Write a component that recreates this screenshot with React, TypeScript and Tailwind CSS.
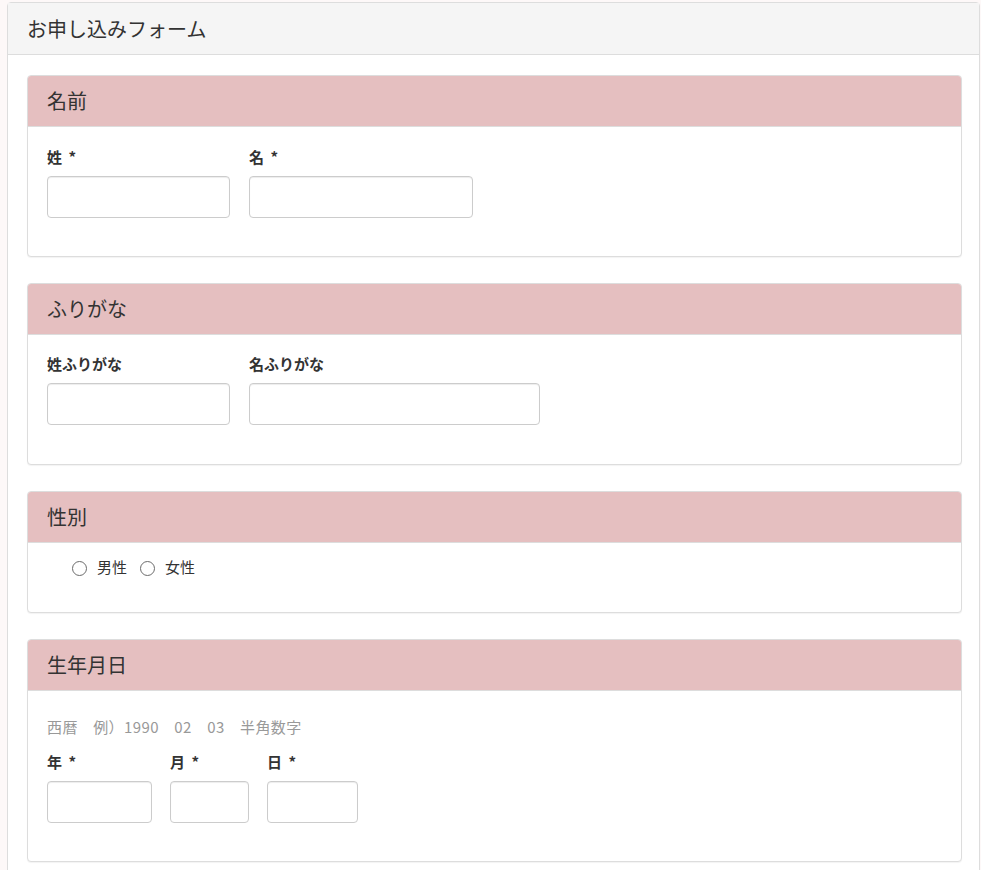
import React from "react";

const FONT = {
  fontFamily: '"Noto Sans CJK JP", "Noto Sans", sans-serif',
};

function Section({
  title,
  bodyClass,
  children,
}: {
  title: string;
  bodyClass: string;
  children: React.ReactNode;
}) {
  return (
    <div className="rounded-[4px] border border-[#dddddd] bg-white shadow-[0_1px_1px_rgba(0,0,0,0.05)]">
      <div className="flex h-[51px] items-center rounded-t-[3px] border-b border-[#dddddd] bg-[#e5bfc0] px-[19px] text-[20px] leading-[28px] text-[#333333]">
        {title}
      </div>
      <div className={bodyClass}>{children}</div>
    </div>
  );
}

function Field({
  label,
  width,
}: {
  label: string;
  width: string;
}) {
  return (
    <div className="flex flex-col">
      <label className="h-5 text-[15px] font-bold leading-5 text-[#333333] [word-spacing:3px]">
        {label}
      </label>
      <input
        type="text"
        className={`mt-[9px] h-[42px] rounded-[4px] border border-[#cccccc] bg-white px-3 shadow-[inset_0_1px_1px_rgba(0,0,0,0.075)] outline-none ${width}`}
      />
    </div>
  );
}

function Radio({ label }: { label: string }) {
  return (
    <label className="flex items-center text-[15px] leading-5 text-[#333333]">
      <span className="mt-[3px] inline-block h-[15px] w-[15px] rounded-full border border-[#6b6b6b] bg-white" />
      <span className="ml-[10px]">{label}</span>
    </label>
  );
}

export default function App() {
  return (
    <div className="min-h-screen bg-[#fdf8f8] pt-[2px] pl-[7px] pr-px" style={FONT}>
      <div className="rounded-t-[4px] border border-[#dddddd] bg-white">
        <div className="flex h-[52px] items-center border-b border-[#dddddd] bg-[#f5f5f5] px-[19px] text-[20px] leading-[28px] text-[#333333]">
          お申し込みフォーム
        </div>
        <div className="flex flex-col gap-[26px] pl-[19px] pr-[17px] pt-[20px] pb-5">
          <Section title="名前" bodyClass="px-[19px] pt-[20px] pb-[38px]">
            <div className="flex gap-[19px]">
              <Field label="姓 *" width="w-[183px]" />
              <Field label="名 *" width="w-[224px]" />
            </div>
          </Section>

          <Section title="ふりがな" bodyClass="px-[19px] pt-[19px] pb-[39px]">
            <div className="flex gap-[19px]">
              <Field label="姓ふりがな" width="w-[183px]" />
              <Field label="名ふりがな" width="w-[291px]" />
            </div>
          </Section>

          <Section title="性別" bodyClass="pl-[44px] pt-[14px] pb-[35px]">
            <div className="flex gap-[13px]">
              <Radio label="男性" />
              <Radio label="女性" />
            </div>
          </Section>

          <Section title="生年月日" bodyClass="px-[19px] pt-[26px] pb-[38px]">
            <p className="h-5 text-[15px] leading-5 tracking-[0.4px] text-[#999999]">
              西暦　例）1990　02　03　半角数字
            </p>
            <div className="mt-[15px] flex gap-[18px]">
              <Field label="年 *" width="w-[105px]" />
              <Field label="月 *" width="w-[79px]" />
              <Field label="日 *" width="w-[91px]" />
            </div>
          </Section>
        </div>
      </div>
    </div>
  );
}
